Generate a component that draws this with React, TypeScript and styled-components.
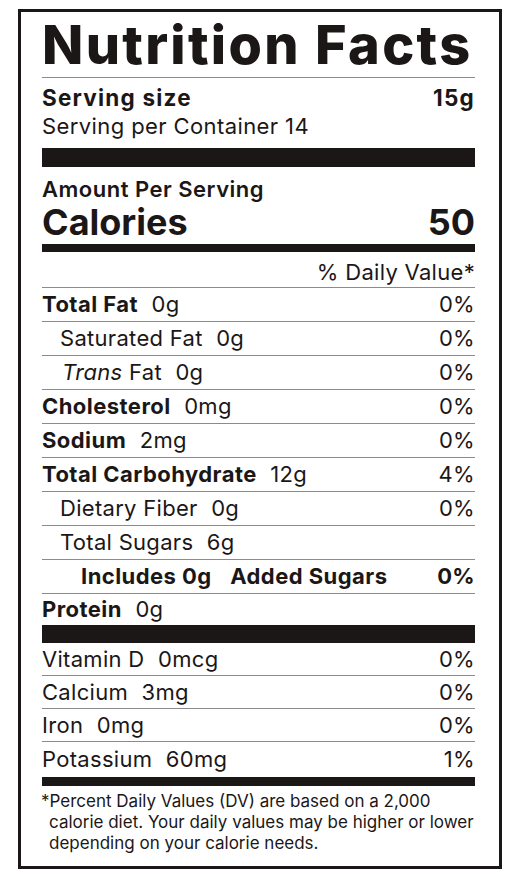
import styled, { createGlobalStyle } from "styled-components";

const GlobalStyle = createGlobalStyle`
  html, body {
    margin: 0;
    padding: 0;
    background: #fff;
  }
  body {
    font-family: Inter, "Noto Sans", "Liberation Sans", sans-serif;
    color: #1b1717;
  }
`;

const Page = styled.div`
  padding: 9px 19px 10px 18px;
`;

const Label = styled.section`
  width: 433px;
  border: 3px solid #1b1717;
  padding: 6px 24px 12px 21px;
`;

const Title = styled.h1`
  margin: 0;
  font-size: 54px;
  line-height: 54px;
  font-weight: 800;
  letter-spacing: 2.3px;
  white-space: nowrap;
`;

const Rule = styled.hr`
  margin: 5px 0 0;
  border: 0;
  height: 1px;
  background: #8c8a8a;
`;

const Bar = styled.div<{ size: number; top?: number }>`
  height: ${({ size }) => size}px;
  margin-top: ${({ top = 0 }) => top}px;
  background: #1b1717;
`;

const ServingSize = styled.div`
  display: flex;
  justify-content: space-between;
  margin-top: 7px;
  font-size: 22.5px;
  line-height: 26px;
  font-weight: 700;
  letter-spacing: 1.2px;
`;

const ServingCount = styled.div`
  margin-top: 2px;
  font-size: 22px;
  line-height: 26px;
  letter-spacing: 0.4px;
`;

const AmountHead = styled.div`
  margin-top: 10px;
  font-size: 22px;
  line-height: 24px;
  font-weight: 600;
  letter-spacing: 0.5px;
`;

const Calories = styled.div`
  display: flex;
  justify-content: space-between;
  margin-top: 2px;
  font-size: 36px;
  line-height: 38px;
  font-weight: 700;
`;

const DailyHead = styled.div`
  padding-top: 6px;
  text-align: right;
  font-size: 22px;
  line-height: 29px;
  letter-spacing: 0.3px;
  border-bottom: 1px solid #8c8a8a;
`;

const Row = styled.div<{ h: number; indent?: number; last?: boolean }>`
  display: flex;
  justify-content: space-between;
  height: ${({ h }) => h}px;
  line-height: ${({ h }) => h}px;
  padding-left: ${({ indent = 0 }) => indent}px;
  font-size: 22px;
  letter-spacing: 0.3px;
  border-bottom: ${({ last }) => (last ? "0" : "1px solid #8c8a8a")};
  white-space: nowrap;
`;

const Name = styled.span<{ bold?: boolean }>`
  font-weight: ${({ bold }) => (bold ? 700 : 400)};
  letter-spacing: ${({ bold }) => (bold ? "0.45px" : "0.3px")};
`;

const Amt = styled.span<{ gap?: number }>`
  margin-left: ${({ gap = 7 }) => gap}px;
`;

const Pct = styled.span<{ bold?: boolean }>`
  font-weight: ${({ bold }) => (bold ? 700 : 400)};
`;

const Footnote = styled.p`
  margin: 5px 0 0;
  padding-left: 7px;
  text-indent: -8px;
  font-size: 17px;
  line-height: 21px;
`;

type Nutrient = {
  name: React.ReactNode;
  amount: string;
  pct?: string;
  bold?: boolean;
  indent?: number;
};

const fats: Nutrient[] = [
  { name: "Total Fat", amount: "0g", pct: "0%", bold: true },
  { name: "Saturated Fat", amount: "0g", pct: "0%", indent: 18 },
  {
    name: (
      <>
        <i>Trans</i> Fat
      </>
    ),
    amount: "0g",
    pct: "0%",
    indent: 20,
  },
  { name: "Cholesterol", amount: "0mg", pct: "0%", bold: true },
  { name: "Sodium", amount: "2mg", pct: "0%", bold: true },
  { name: "Total Carbohydrate", amount: "12g", pct: "4%", bold: true },
  { name: "Dietary Fiber", amount: "0g", pct: "0%", indent: 18 },
  { name: "Total Sugars", amount: "6g", indent: 18 },
];

const minerals: Nutrient[] = [
  { name: "Vitamin D", amount: "0mcg", pct: "0%" },
  { name: "Calcium", amount: "3mg", pct: "0%" },
  { name: "Iron", amount: "0mg", pct: "0%" },
];

const NutrientRow = ({ n, h }: { n: Nutrient; h: number }) => (
  <Row h={h} indent={n.indent}>
    <span>
      <Name bold={n.bold}>{n.name}</Name> <Amt>{n.amount}</Amt>
    </span>
    {n.pct && <Pct>{n.pct}</Pct>}
  </Row>
);

const App = () => {
  return (
    <Page>
      <GlobalStyle />
      <Label>
        <Title>Nutrition Facts</Title>
        <Rule />
        <ServingSize>
          <span>Serving size</span>
          <span>15g</span>
        </ServingSize>
        <ServingCount>Serving per Container 14</ServingCount>
        <Bar size={19} top={9} />

        <AmountHead>Amount Per Serving</AmountHead>
        <Calories>
          <span>Calories</span>
          <span>50</span>
        </Calories>
        <Bar size={8} top={3} />
        <DailyHead>% Daily Value*</DailyHead>

        {fats.map((n, i) => (
          <NutrientRow key={i} n={n} h={33} />
        ))}
        <Row h={33} indent={39}>
          <span>
            <Name bold>Includes 0g</Name> <Amt gap={12}><Name bold>Added Sugars</Name></Amt>
          </span>
          <Pct bold>0%</Pct>
        </Row>
        <Row h={31} last>
          <span>
            <Name bold>Protein</Name> <Amt>0g</Amt>
          </span>
        </Row>
        <Bar size={18} />

        {minerals.map((n, i) => (
          <NutrientRow key={i} n={n} h={32} />
        ))}
        <Row h={35} last>
          <span>
            <Name>Potassium</Name> <Amt>60mg</Amt>
          </span>
          <Pct>1%</Pct>
        </Row>
        <Bar size={9} />

        <Footnote>
          *Percent Daily Values (DV) are based on a 2,000
          <br />
          calorie diet. Your daily values may be higher or lower
          <br />
          depending on your calorie needs.
        </Footnote>
      </Label>
    </Page>
  );
};

export default App;
